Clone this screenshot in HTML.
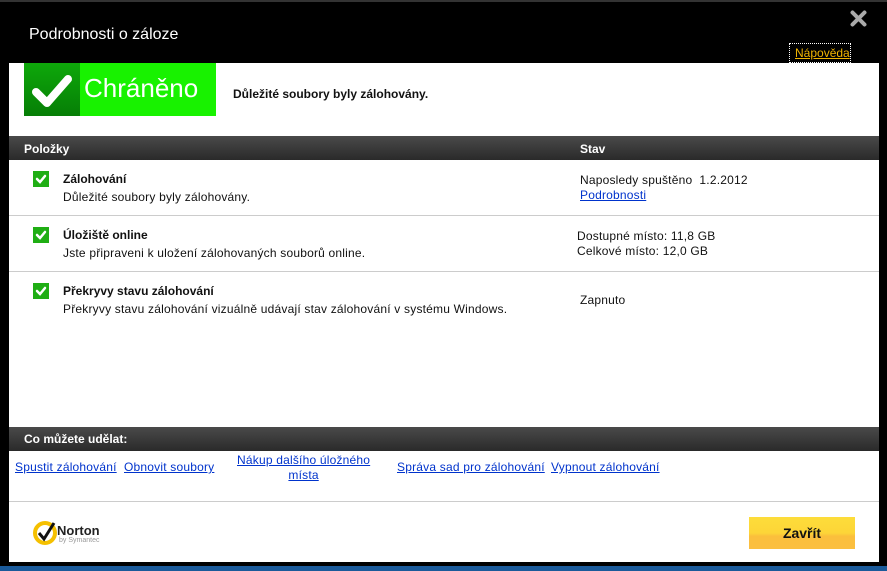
<!DOCTYPE html>
<html><head><meta charset="utf-8"><style>
*{margin:0;padding:0;box-sizing:border-box}
body{width:887px;height:571px;background:#000;font-family:"Liberation Sans",Arial,sans-serif;position:relative;overflow:hidden}
.a{position:absolute;white-space:nowrap}
.lnk{color:#0033cc;text-decoration:underline;font-size:12px;letter-spacing:0.2px}
.t12{font-size:12px;color:#111;letter-spacing:0.2px}
.b{font-weight:bold}
.bar{position:absolute;left:9px;width:870px;background:linear-gradient(#4a4a4a,#2a2a2a);color:#fff;font-weight:bold;font-size:12px}
.chk{position:absolute;left:33px;width:16px;height:16px;background:#1fae14}
.hr{position:absolute;left:9px;width:870px;height:1px;background:#ccc}
</style></head><body>
<div class="a" style="left:0;top:0;width:887px;height:2px;background:#333"></div>
<div class="a" style="left:0;top:565px;width:887px;height:6px;background:#1a5a9a"></div>
<div class="a" style="left:0;top:562px;width:887px;height:4px;background:#000"></div>
<div class="a" style="left:29px;top:26px;color:#fff;font-size:16px">Podrobnosti o záloze</div>
<svg class="a" style="left:850px;top:10px" width="17" height="17" viewBox="0 0 17 17"><path d="M2.5 2.5L14.5 14.5M14.5 2.5L2.5 14.5" stroke="#aaa" stroke-width="4" stroke-linecap="round"/></svg>
<div class="a" style="left:9px;top:63px;width:870px;height:499px;background:#fff"></div>
<div class="a" style="left:789px;top:43px;width:62px;height:20px;border:1px dotted #fff"></div>
<div class="a" style="left:795px;top:46px;color:#f0b400;font-size:12px;text-decoration:underline">Nápověda</div>
<div class="a" style="left:24px;top:63px;width:192px;height:53px;background:#18f200"></div>
<div class="a" style="left:24px;top:63px;width:56px;height:53px;background:linear-gradient(#0ea80a,#067e06)"></div>
<svg class="a" style="left:30px;top:73px" width="44" height="36" viewBox="0 0 44 36"><path d="M6 19L17 30L38 6" fill="none" stroke="#fff" stroke-width="8" stroke-linecap="round" stroke-linejoin="round"/></svg>
<div class="a" style="left:84px;top:73px;color:#fff;font-size:26px">Chráněno</div>
<div class="a b t12" style="left:233px;top:87px;letter-spacing:0">Důležité soubory byly zálohovány.</div>
<div class="bar" style="top:136px;height:24px"><span class="a" style="left:15px;top:6px">Položky</span><span class="a" style="left:571px;top:6px">Stav</span></div>
<div class="chk" style="top:171px"></div><div class="chk" style="top:227px"></div><div class="chk" style="top:283px"></div>
<svg class="a" style="left:33px;top:171px" width="16" height="128" viewBox="0 0 16 128"><g fill="none" stroke="#fff" stroke-width="2.5" stroke-linecap="round"><path d="M4 8l3 3l5-6"/><path d="M4 64l3 3l5-6"/><path d="M4 120l3 3l5-6"/></g></svg>
<div class="a b t12" style="left:63px;top:172px;letter-spacing:0">Zálohování</div>
<div class="a t12" style="left:63px;top:190px">Důležité soubory byly zálohovány.</div>
<div class="a t12" style="left:580px;top:173px">Naposledy spuštěno&nbsp; 1.2.2012</div>
<div class="a lnk" style="left:580px;top:188px">Podrobnosti</div>
<div class="hr" style="top:215px"></div>
<div class="a b t12" style="left:63px;top:228px;letter-spacing:0">Úložiště online</div>
<div class="a t12" style="left:63px;top:246px">Jste připraveni k uložení zálohovaných souborů online.</div>
<div class="a t12" style="left:577px;top:229px">Dostupné místo: 11,8 GB</div>
<div class="a t12" style="left:577px;top:244px">Celkové místo: 12,0 GB</div>
<div class="hr" style="top:271px"></div>
<div class="a b t12" style="left:63px;top:284px;letter-spacing:0">Překryvy stavu zálohování</div>
<div class="a t12" style="left:63px;top:302px">Překryvy stavu zálohování vizuálně udávají stav zálohování v systému Windows.</div>
<div class="a t12" style="left:580px;top:293px">Zapnuto</div>
<div class="bar" style="top:427px;height:24px"><span class="a" style="left:15px;top:5px">Co můžete udělat:</span></div>
<div class="a lnk" style="left:15px;top:460px">Spustit zálohování</div>
<div class="a lnk" style="left:124px;top:460px">Obnovit soubory</div>
<div class="a lnk" style="left:237px;top:453px;text-align:center;line-height:15px">Nákup dalšího úložného<br>místa</div>
<div class="a lnk" style="left:397px;top:460px">Správa sad pro zálohování</div>
<div class="a lnk" style="left:551px;top:460px">Vypnout zálohování</div>
<div class="hr" style="top:501px"></div>
<svg class="a" style="left:32px;top:518px" width="28" height="28" viewBox="0 0 28 28"><circle cx="13" cy="15" r="10" fill="none" stroke="#f5c000" stroke-width="4"/><path d="M7 15l5 6l10-16" fill="none" stroke="#111" stroke-width="3"/></svg>
<div class="a b" style="left:57px;top:523px;font-size:13px;color:#222">Norton</div>
<div class="a" style="left:59px;top:537px;font-size:7px;color:#999">by Symantec</div>
<div class="a b" style="left:749px;top:517px;width:106px;height:32px;background:linear-gradient(#fddd3a 0%,#fdd538 50%,#fbbf3c 60%,#fbbf40 100%);text-align:center;line-height:32px;font-size:14px;color:#111">Zavřít</div>
</body></html>
